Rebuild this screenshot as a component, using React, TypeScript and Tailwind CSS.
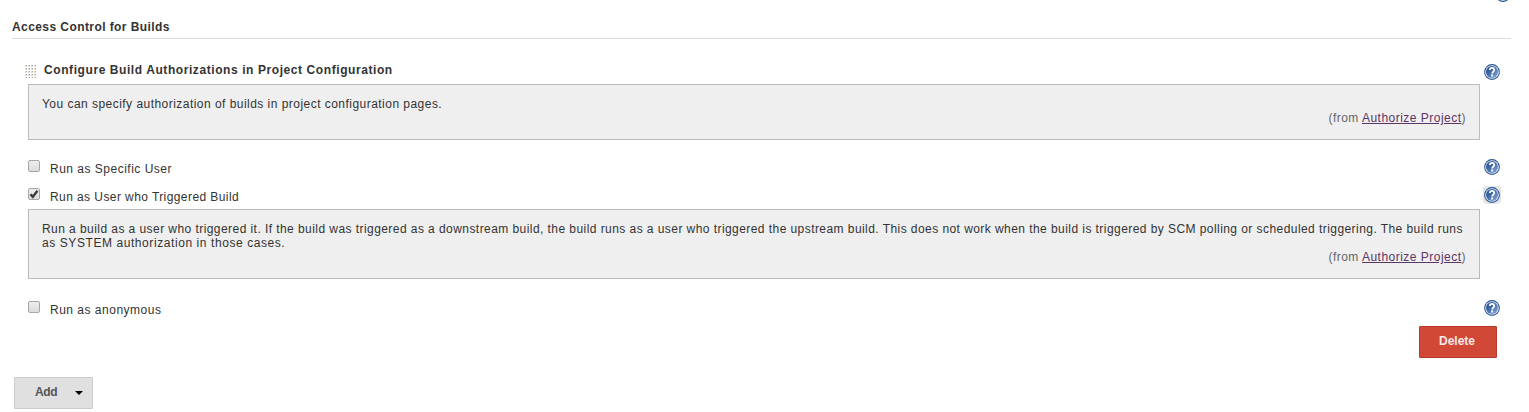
import React, { useId } from "react";

function HelpIcon({ active = false }: { active?: boolean }) {
  const id = useId();
  return (
    <button
      type="button"
      aria-label="Help"
      className={`flex size-[18px] items-center justify-center rounded-[3px] ${active ? "bg-[#e6e6e6]" : ""}`}
    >
      <svg width="16" height="16" viewBox="0 0 16 16">
        <defs>
          <linearGradient id={id} x1="0" y1="0" x2="1" y2="1">
            <stop offset="0" stopColor="#1f4682" />
            <stop offset="0.4" stopColor="#3d66a3" />
            <stop offset="1" stopColor="#8eaedb" />
          </linearGradient>
        </defs>
        <circle cx="8" cy="8" r="7.9" fill="#2a5594" />
        <circle cx="8" cy="8" r="6.8" fill="#f0f4fa" />
        <circle cx="8" cy="8" r="6" fill={`url(#${id})`} />
        <path d="M5.8 6C5.8 4.4 6.7 3.8 8 3.8s2.2.8 2.2 2.1c0 1.7-2 1.8-2 3.6" fill="none" stroke="#fff" strokeWidth="1.8" />
        <rect x="7.1" y="10.5" width="2" height="2" fill="#fff" />
      </svg>
    </button>
  );
}

function Grip() {
  return (
    <svg width="11" height="13" viewBox="0 0 11 13">
      {[0, 3, 6, 9, 12].map((y) =>
        [0, 3, 6, 9].map((x) => (
          <g key={`${x}-${y}`}>
            <rect x={x} y={y} width="2" height={y === 12 ? 1 : 2} fill="#dedbd5" />
            <rect x={x + 1} y={y} width="1" height="1" fill="#aaa69e" />
          </g>
        )),
      )}
    </svg>
  );
}

function CheckRow({ label, checked = false }: { label: string; checked?: boolean }) {
  return (
    <div className="flex h-7 items-start justify-between pr-7">
      <label className="flex items-start">
        <span className="mt-0.5 size-3 rounded-[2px] border border-[#a6a6a6] bg-linear-to-b from-[#eeeeee] to-[#dcdcdc]">
          {checked && (
            <svg width="10" height="10" viewBox="0 0 10 10">
              <path d="M1.5 5.2 3.8 7.8 8.5 1.7" fill="none" stroke="#3c3c3c" strokeWidth="2.4" />
            </svg>
          )}
        </span>
        <span className={`mt-1 ml-2.5 leading-[14px] ${checked ? "tracking-[0.42px]" : "tracking-[0.5px]"}`}>{label}</span>
      </label>
      <HelpIcon active={checked} />
    </div>
  );
}

function HelpBox({ children, className }: { children: React.ReactNode; className: string }) {
  return (
    <div className={`mr-[49px] border border-[#bbbbbb] bg-[#efefef] px-[13px] pt-3 leading-[14px] ${className}`}>
      {children}
      <div className="text-right tracking-[0.48px] text-[#666666]">
        (from <a className="text-[#5c3566] underline">Authorize Project</a>)
      </div>
    </div>
  );
}

export default function App() {
  return (
    <main className="h-[412px] overflow-hidden bg-white font-['Liberation_Sans',Arial,sans-serif] text-[12px] text-[#333333]">
      <div className="relative">
        <div className="absolute -top-[15px] left-[1494px]">
          <HelpIcon />
        </div>
      </div>
      <h2 className="mr-[18px] ml-3 h-[39px] border-b border-[#dddddd] pt-5 leading-[14px] font-bold tracking-[0.42px]">Access Control for Builds</h2>
      <section className="pl-7">
        <div className="-ml-[3px] flex h-[45px] items-start justify-between pt-6 pr-7">
          <div className="flex">
            <div className="pt-0.5">
              <Grip />
            </div>
            <h3 className="ml-2 leading-[14px] font-bold tracking-[0.58px]">Configure Build Authorizations in Project Configuration</h3>
          </div>
          <HelpIcon />
        </div>
        <HelpBox className="h-14">
          <p className="tracking-[0.465px]">You can specify authorization of builds in project configuration pages.</p>
        </HelpBox>
        <div className="pt-[18px]">
          <CheckRow label="Run as Specific User" />
          <div className="h-[23px]">
            <CheckRow label="Run as User who Triggered Build" checked />
          </div>
        </div>
        <HelpBox className="h-[70px]">
          <p className="whitespace-nowrap tracking-[0.437px]">
            Run a build as a user who triggered it. If the build was triggered as a downstream build, the build runs as a user who triggered the upstream build. This does not work when the build is triggered by SCM polling or scheduled triggering. The build runs
            <br />
            <span className="tracking-[0.577px]">as SYSTEM authorization in those cases.</span>
          </p>
        </HelpBox>
        <div className="pt-5">
          <CheckRow label="Run as anonymous" />
        </div>
      </section>
      <div className="flex justify-end pr-8">
        <button type="button" className="mt-[-1px] h-8 w-[78px] rounded-[1px] border border-[#b73a2b] bg-[#d14836] pr-0.5 pb-0.5 font-bold text-[#f4e8e6]">Delete</button>
      </div>
      <button type="button" className="mt-[19px] ml-3.5 flex h-8 w-[79px] items-center rounded-[1px] border border-[#cccccc] bg-[#e0e0e0] pb-0.5 pl-5 font-bold tracking-[-0.4px] text-[#555555]">
        Add
        <svg className="mt-0.5 ml-[18px]" width="8" height="4" viewBox="0 0 8 4">
          <path d="M0 0h8L4 4z" fill="#000" />
        </svg>
      </button>
    </main>
  );
}
